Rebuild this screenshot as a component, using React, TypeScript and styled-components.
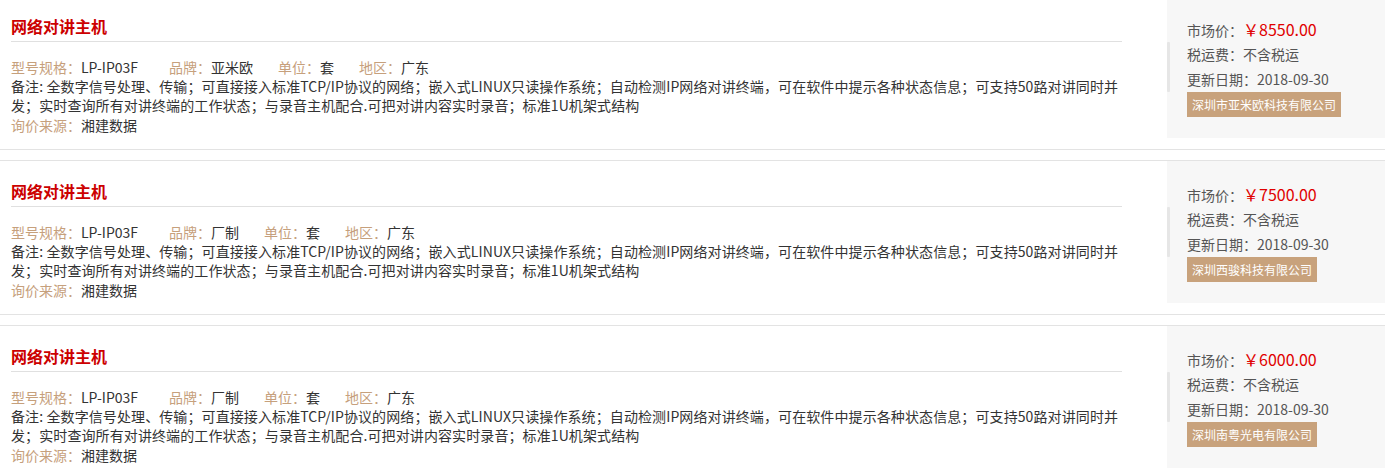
import styled, { createGlobalStyle } from 'styled-components'

const GlobalStyle = createGlobalStyle`
  body {
    margin: 0;
    background: #fff;
    font-family: "Noto Sans CJK SC", "Liberation Sans", sans-serif;
    color: #333;
  }
`

type Offer = {
  brand: string
  price: string
  company: string
}

const offers: Offer[] = [
  { brand: '亚米欧', price: '8550.00', company: '深圳市亚米欧科技有限公司' },
  { brand: '厂制', price: '7500.00', company: '深圳西骏科技有限公司' },
  { brand: '厂制', price: '6000.00', company: '深圳南粤光电有限公司' },
]

const note =
  '备注: 全数字信号处理、传输；可直接接入标准TCP/IP协议的网络；嵌入式LINUX只读操作系统；自动检测IP网络对讲终端，可在软件中提示各种状态信息；可支持50路对讲同时并发；实时查询所有对讲终端的工作状态；与录音主机配合.可把对讲内容实时录音；标准1U机架式结构'

export default function App() {
  return (
    <>
      <GlobalStyle />
      <List>
        {offers.map((o, i) => (
          <Item key={i}>
            <Main>
              <Title>网络对讲主机</Title>
              <Specs>
                <Spec><Label>型号规格：</Label>LP-IP03F</Spec>
                <Spec><Label>品牌：</Label>{o.brand}</Spec>
                <Spec><Label>单位：</Label>套</Spec>
                <Spec><Label>地区：</Label>广东</Spec>
              </Specs>
              <Note>{note}</Note>
              <Source><Label>询价来源：</Label>湘建数据</Source>
            </Main>
            <Side>
              <Bar />
              <Info>
                <InfoRow>市场价：<Price>￥{o.price}</Price></InfoRow>
                <InfoRow>税运费：不含税运</InfoRow>
                <InfoRow>更新日期：2018-09-30</InfoRow>
                <Company>{o.company}</Company>
              </Info>
            </Side>
          </Item>
        ))}
      </List>
    </>
  )
}

const List = styled.div`
  margin-top: -5px;
`

const Item = styled.div`
  display: flex;
  justify-content: space-between;
  align-items: flex-start;
  border-top: 1px solid #e3e3e3;
  border-bottom: 1px solid #e3e3e3;
  margin-bottom: 10px;
`

const Main = styled.div`
  width: 1111px;
  padding: 15px 0 14px 11px;
  font-size: 14px;
`

const Title = styled.h3`
  margin: 0;
  height: 30px;
  line-height: 30px;
  font-size: 16px;
  font-weight: bold;
  color: #cc0000;
  border-bottom: 1px solid #e0e0e0;
`

const Specs = styled.div`
  display: flex;
  margin-top: 15px;
  line-height: 20px;
  color: #333;
`

const Spec = styled.span`
  margin-right: 25px;
  &:first-child {
    margin-right: 31px;
  }
`

const Label = styled.span`
  color: #c6a07c;
`

const Note = styled.p`
  margin: 0;
  line-height: 19px;
  letter-spacing: 0.1px;
  word-break: break-all;
  color: #333;
`

const Source = styled.div`
  line-height: 20px;
  color: #333;
`

const Side = styled.div`
  display: flex;
  width: 218px;
  height: 142px;
  background: #f7f7f7;
`

const Bar = styled.div`
  width: 3px;
  height: 50px;
  margin-top: 46px;
  background: #e6e6e6;
  border-radius: 1px;
`

const Info = styled.div`
  display: flex;
  flex-direction: column;
  align-items: flex-start;
  padding: 21px 0 0 17px;
  font-size: 14px;
  color: #555;
`

const InfoRow = styled.div`
  height: 25px;
  line-height: 25px;
  white-space: nowrap;
`

const Price = styled.span`
  font-size: 16px;
  color: #e00000;
`

const Company = styled.div`
  height: 25px;
  line-height: 25px;
  padding: 0 5px;
  font-size: 12px;
  color: #fff;
  background: #c8a27c;
`
